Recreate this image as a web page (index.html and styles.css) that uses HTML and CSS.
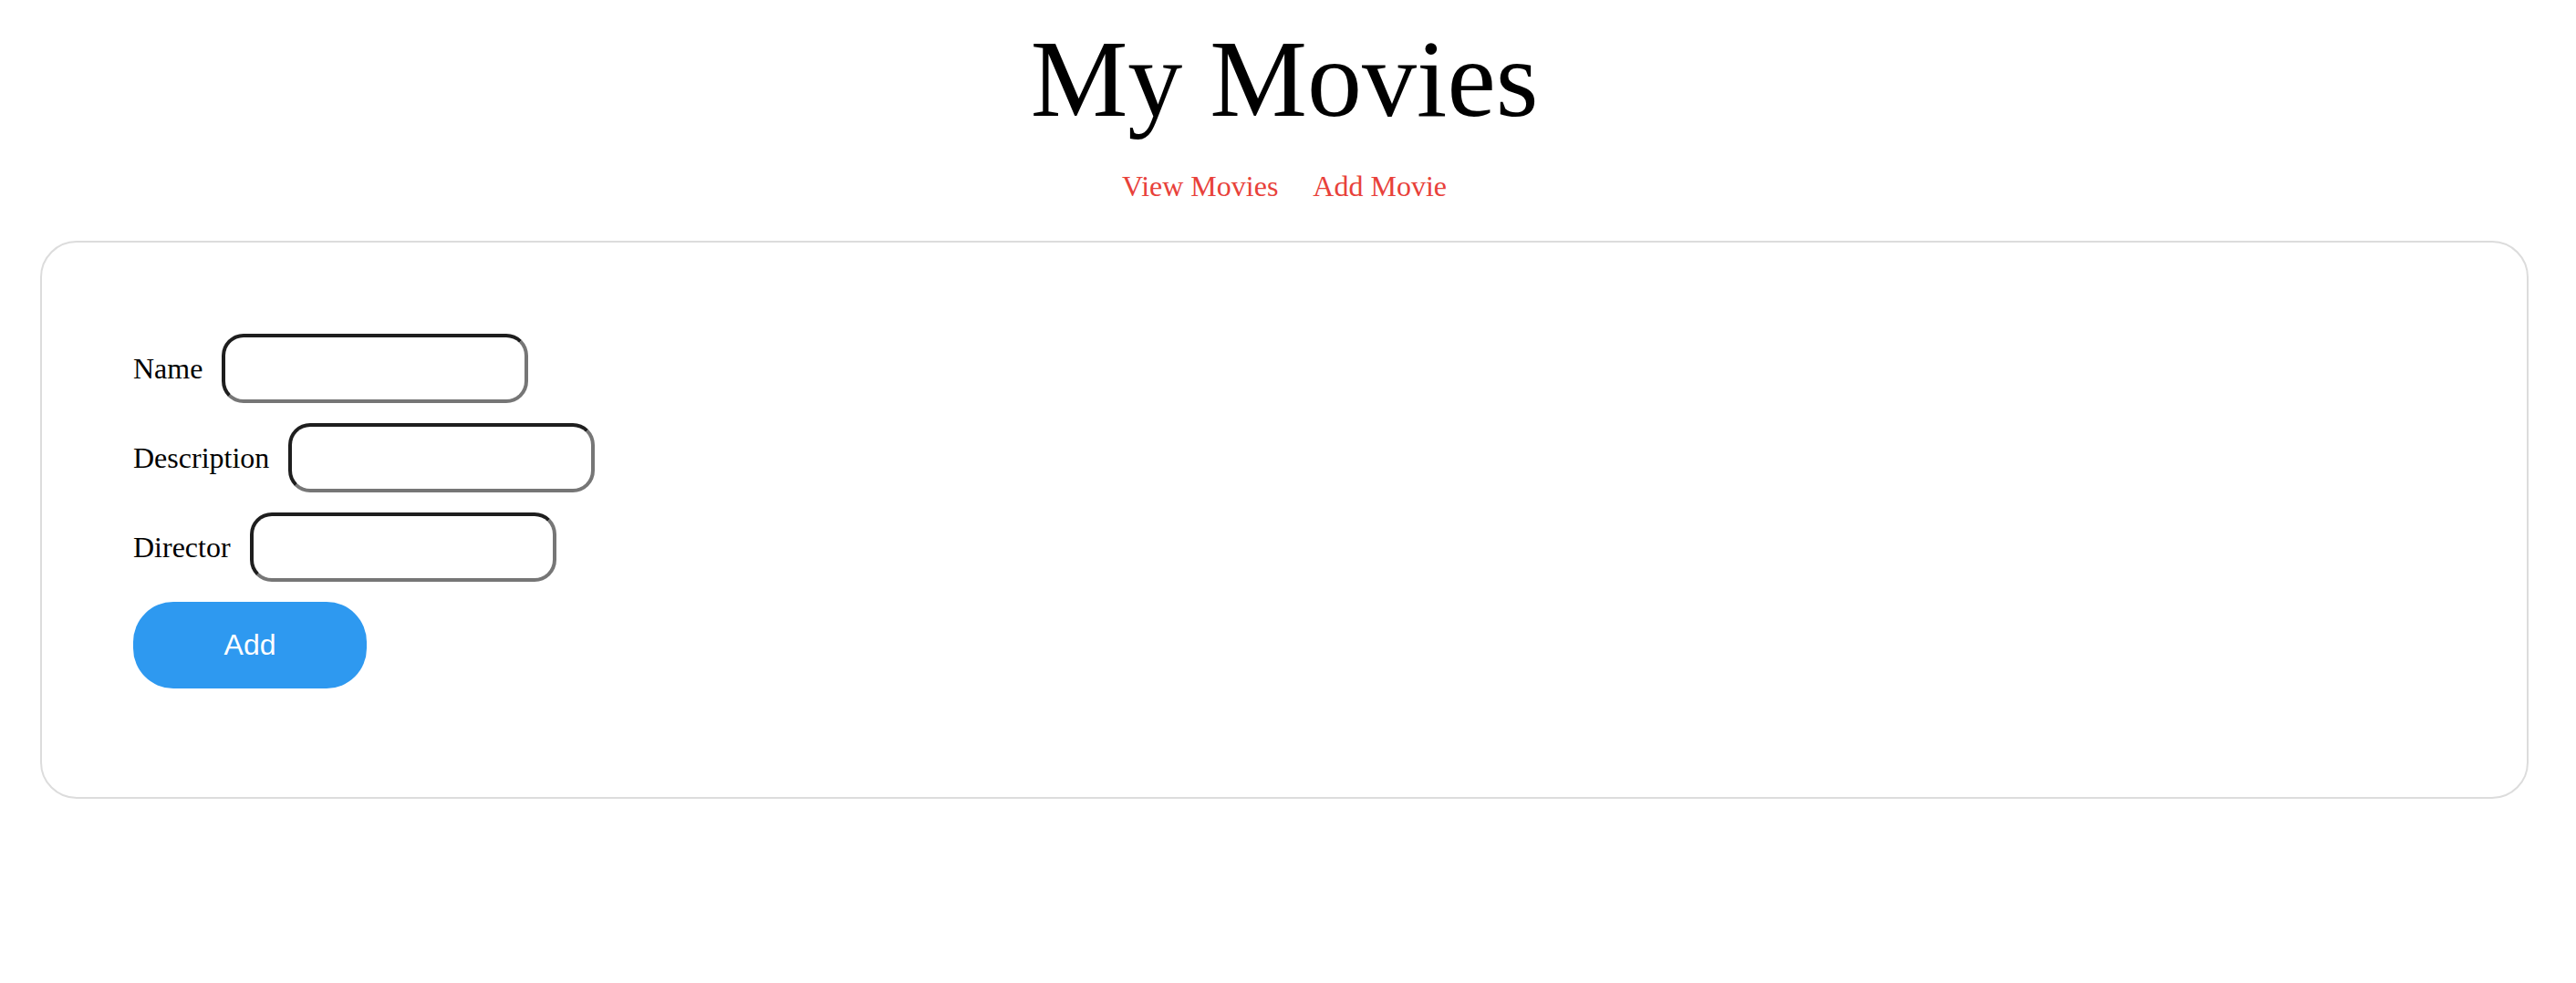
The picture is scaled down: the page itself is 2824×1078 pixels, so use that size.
FILE: index.html
```html
<!DOCTYPE html>
<html lang="en">
<head>
<meta charset="utf-8">
<title>My Movies</title>
<link rel="stylesheet" href="styles.css">
</head>
<body>
<div class="page">
  <h1 class="title">My Movies</h1>
  <nav class="nav">
    <a class="nav-link" href="#">View Movies</a>
    <a class="nav-link" href="#">Add Movie</a>
  </nav>
  <section class="card">
    <form class="form">
      <div class="row">
        <label class="label" for="name">Name</label>
        <input class="field" id="name" type="text">
      </div>
      <div class="row">
        <label class="label" for="description">Description</label>
        <input class="field" id="description" type="text">
      </div>
      <div class="row">
        <label class="label" for="director">Director</label>
        <input class="field" id="director" type="text">
      </div>
      <button class="btn" type="button">Add</button>
    </form>
  </section>
</div>
</body>
</html>
```

FILE: styles.css
```css
html, body {
  margin: 0;
  padding: 0;
  background: #ffffff;
}

body {
  font-family: "Liberation Serif", "Times New Roman", serif;
  color: #000000;
}

.page {
  padding: 18px 8px 0 0;
}

.title {
  margin: 0;
  font-size: 120px;
  font-weight: normal;
  line-height: normal;
  text-align: center;
}

.nav {
  margin-top: 30px;
  display: flex;
  justify-content: center;
  gap: 38px;
  font-size: 32px;
  line-height: normal;
}

.nav-link {
  color: #e8413a;
  text-decoration: none;
}

.card {
  margin: 41px 44px 0 44px;
  border: 2px solid #dcdcdc;
  border-radius: 40px;
  padding: 100px 100px 119px;
}

.form {
  display: flex;
  flex-direction: column;
  align-items: flex-start;
  gap: 22px;
}

.row {
  display: flex;
  align-items: center;
  gap: 21px;
}

.label {
  font-size: 32px;
  line-height: normal;
}

.field {
  box-sizing: border-box;
  width: 336px;
  height: 76px;
  border-width: 4px;
  border-style: solid;
  border-color: #1e1e1e #767676 #767676 #1e1e1e;
  border-radius: 24px;
  background: #ffffff;
  padding: 0 16px;
  font-size: 28px;
  outline: none;
}

.btn {
  box-sizing: border-box;
  width: 256px;
  height: 95px;
  border: none;
  border-radius: 44px;
  background: #2e99f0;
  color: #ffffff;
  font-family: "Liberation Sans", Arial, sans-serif;
  font-size: 32px;
  cursor: pointer;
}
```
